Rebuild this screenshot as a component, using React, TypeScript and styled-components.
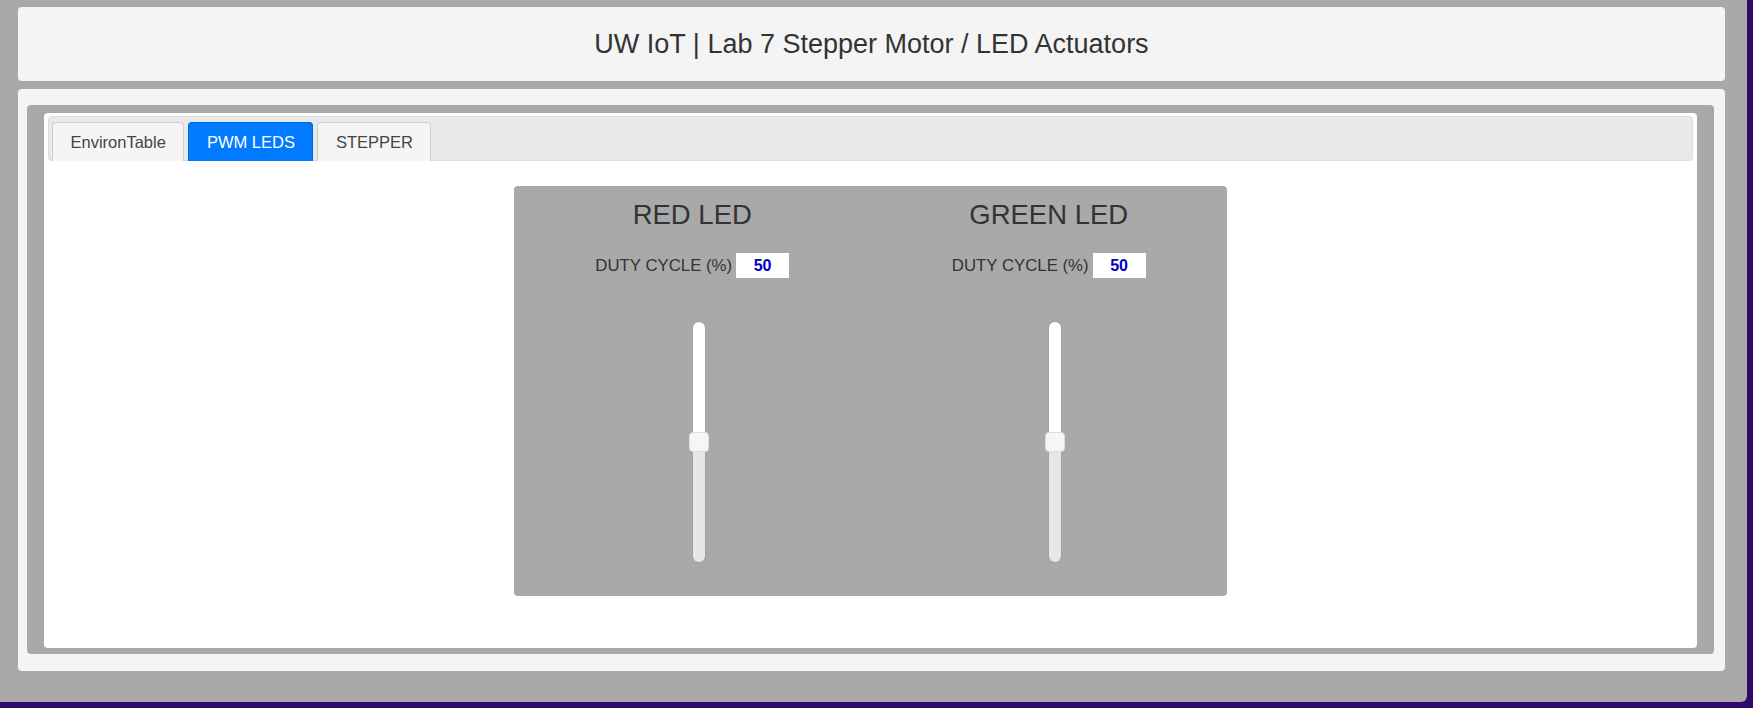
import React from "react";
import styled, { createGlobalStyle } from "styled-components";

const Global = createGlobalStyle`
  html, body {
    margin: 0;
    padding: 0;
    background: #2f0a6b;
    font-family: "Liberation Sans", Arial, sans-serif;
  }
  * { box-sizing: border-box; }
`;

const Page = styled.div`
  width: 1747px;
  height: 702px;
  background: #a9a9a9;
  border-bottom-right-radius: 6px;
  padding: 7px 22px 31px 18px;
  display: flex;
  flex-direction: column;
  gap: 8px;
`;

const Header = styled.header`
  height: 74px;
  flex: none;
  background: #f4f4f4;
  border-radius: 4px;
  display: flex;
  align-items: center;
  justify-content: center;
`;

const Title = styled.h1`
  margin: 0;
  font-size: 27px;
  font-weight: 400;
  color: #333;
  line-height: 1.2;
`;

const Card = styled.main`
  flex: 1;
  background: #f4f4f4;
  border-radius: 4px;
  padding: 16px 11px 17px 9px;
  display: flex;
`;

const Frame = styled.div`
  flex: 1;
  background: #a9a9a9;
  border-radius: 4px;
  padding: 8px 17px 6px 17px;
  display: flex;
`;

const TabsBox = styled.div`
  flex: 1;
  background: #fff;
  border-radius: 4px;
  padding: 3px 4px;
  display: flex;
  flex-direction: column;
`;

const TabStrip = styled.nav`
  height: 45px;
  background: #e9e9e9;
  border: 1px solid #dcdcdc;
  border-radius: 4px;
  padding: 5px 3px 0;
  display: flex;
  align-items: flex-end;
  gap: 4px;
`;

const Tab = styled.button<{ $active?: boolean }>`
  height: 39px;
  margin-bottom: -1px;
  padding: 0 17.5px;
  font-family: "Liberation Sans", Arial, sans-serif;
  font-size: 16.5px;
  color: ${(p) => (p.$active ? "#fff" : "#444")};
  background: ${(p) => (p.$active ? "#007bff" : "#f5f5f5")};
  border: 1px solid ${(p) => (p.$active ? "#0069d9" : "#cfcfcf")};
  border-bottom: none;
  border-radius: 4px 4px 0 0;
  cursor: pointer;
`;

const Content = styled.section`
  padding-top: 25px;
  display: flex;
  justify-content: center;
`;

const LedPanel = styled.div`
  width: 713px;
  height: 410px;
  background: #a9a9a9;
  border-radius: 4px;
  display: grid;
  grid-template-columns: 1fr 1fr;
`;

const LedColumn = styled.div`
  display: flex;
  flex-direction: column;
  align-items: center;
  padding-top: 13px;
`;

const LedTitle = styled.h2`
  margin: 0;
  font-size: 27.5px;
  font-weight: 400;
  line-height: 32px;
  color: #333;
`;

const DutyRow = styled.div`
  margin-top: 22px;
  display: flex;
  align-items: center;
  gap: 4px;
`;

const DutyLabel = styled.label`
  font-size: 16.8px;
  color: #333;
`;

const DutyInput = styled.input`
  width: 53px;
  height: 25px;
  border: none;
  outline: none;
  background: #fff;
  padding: 0;
  text-align: center;
  font-family: "Liberation Sans", Arial, sans-serif;
  font-size: 16px;
  font-weight: 700;
  color: #0000c8;
`;

const SliderWrap = styled.div`
  margin-top: 44px;
  margin-left: 13px;
  position: relative;
  width: 20px;
  height: 240px;
  display: flex;
  justify-content: center;
`;

const Track = styled.div`
  width: 12px;
  height: 100%;
  border-radius: 6px;
  overflow: hidden;
  display: flex;
  flex-direction: column;
  box-shadow: 0 0 0 1px rgba(0, 0, 0, 0.04);
`;

const TrackPart = styled.div<{ $lower?: boolean }>`
  flex: 1;
  background: ${(p) => (p.$lower ? "#e7e7e7" : "#fff")};
`;

const Thumb = styled.div`
  position: absolute;
  left: 0;
  width: 20px;
  height: 20px;
  margin-top: -10px;
  background: #f6f6f6;
  border: 1px solid #dedede;
  border-radius: 4px;
`;

function VerticalSlider({ value }: { value: number }) {
  return (
    <SliderWrap>
      <Track>
        <TrackPart style={{ flex: 100 - value }} />
        <TrackPart $lower style={{ flex: value }} />
      </Track>
      <Thumb style={{ top: `${100 - value}%` }} />
    </SliderWrap>
  );
}

function Led({ name, value }: { name: string; value: number }) {
  return (
    <LedColumn>
      <LedTitle>{name}</LedTitle>
      <DutyRow>
        <DutyLabel>DUTY CYCLE (%)</DutyLabel>
        <DutyInput defaultValue={String(value)} readOnly />
      </DutyRow>
      <VerticalSlider value={value} />
    </LedColumn>
  );
}

export default function App() {
  return (
    <>
      <Global />
      <Page>
        <Header>
          <Title>UW IoT | Lab 7 Stepper Motor / LED Actuators</Title>
        </Header>
        <Card>
          <Frame>
            <TabsBox>
              <TabStrip>
                <Tab>EnvironTable</Tab>
                <Tab $active>PWM LEDS</Tab>
                <Tab>STEPPER</Tab>
              </TabStrip>
              <Content>
                <LedPanel>
                  <Led name="RED LED" value={50} />
                  <Led name="GREEN LED" value={50} />
                </LedPanel>
              </Content>
            </TabsBox>
          </Frame>
        </Card>
      </Page>
    </>
  );
}
